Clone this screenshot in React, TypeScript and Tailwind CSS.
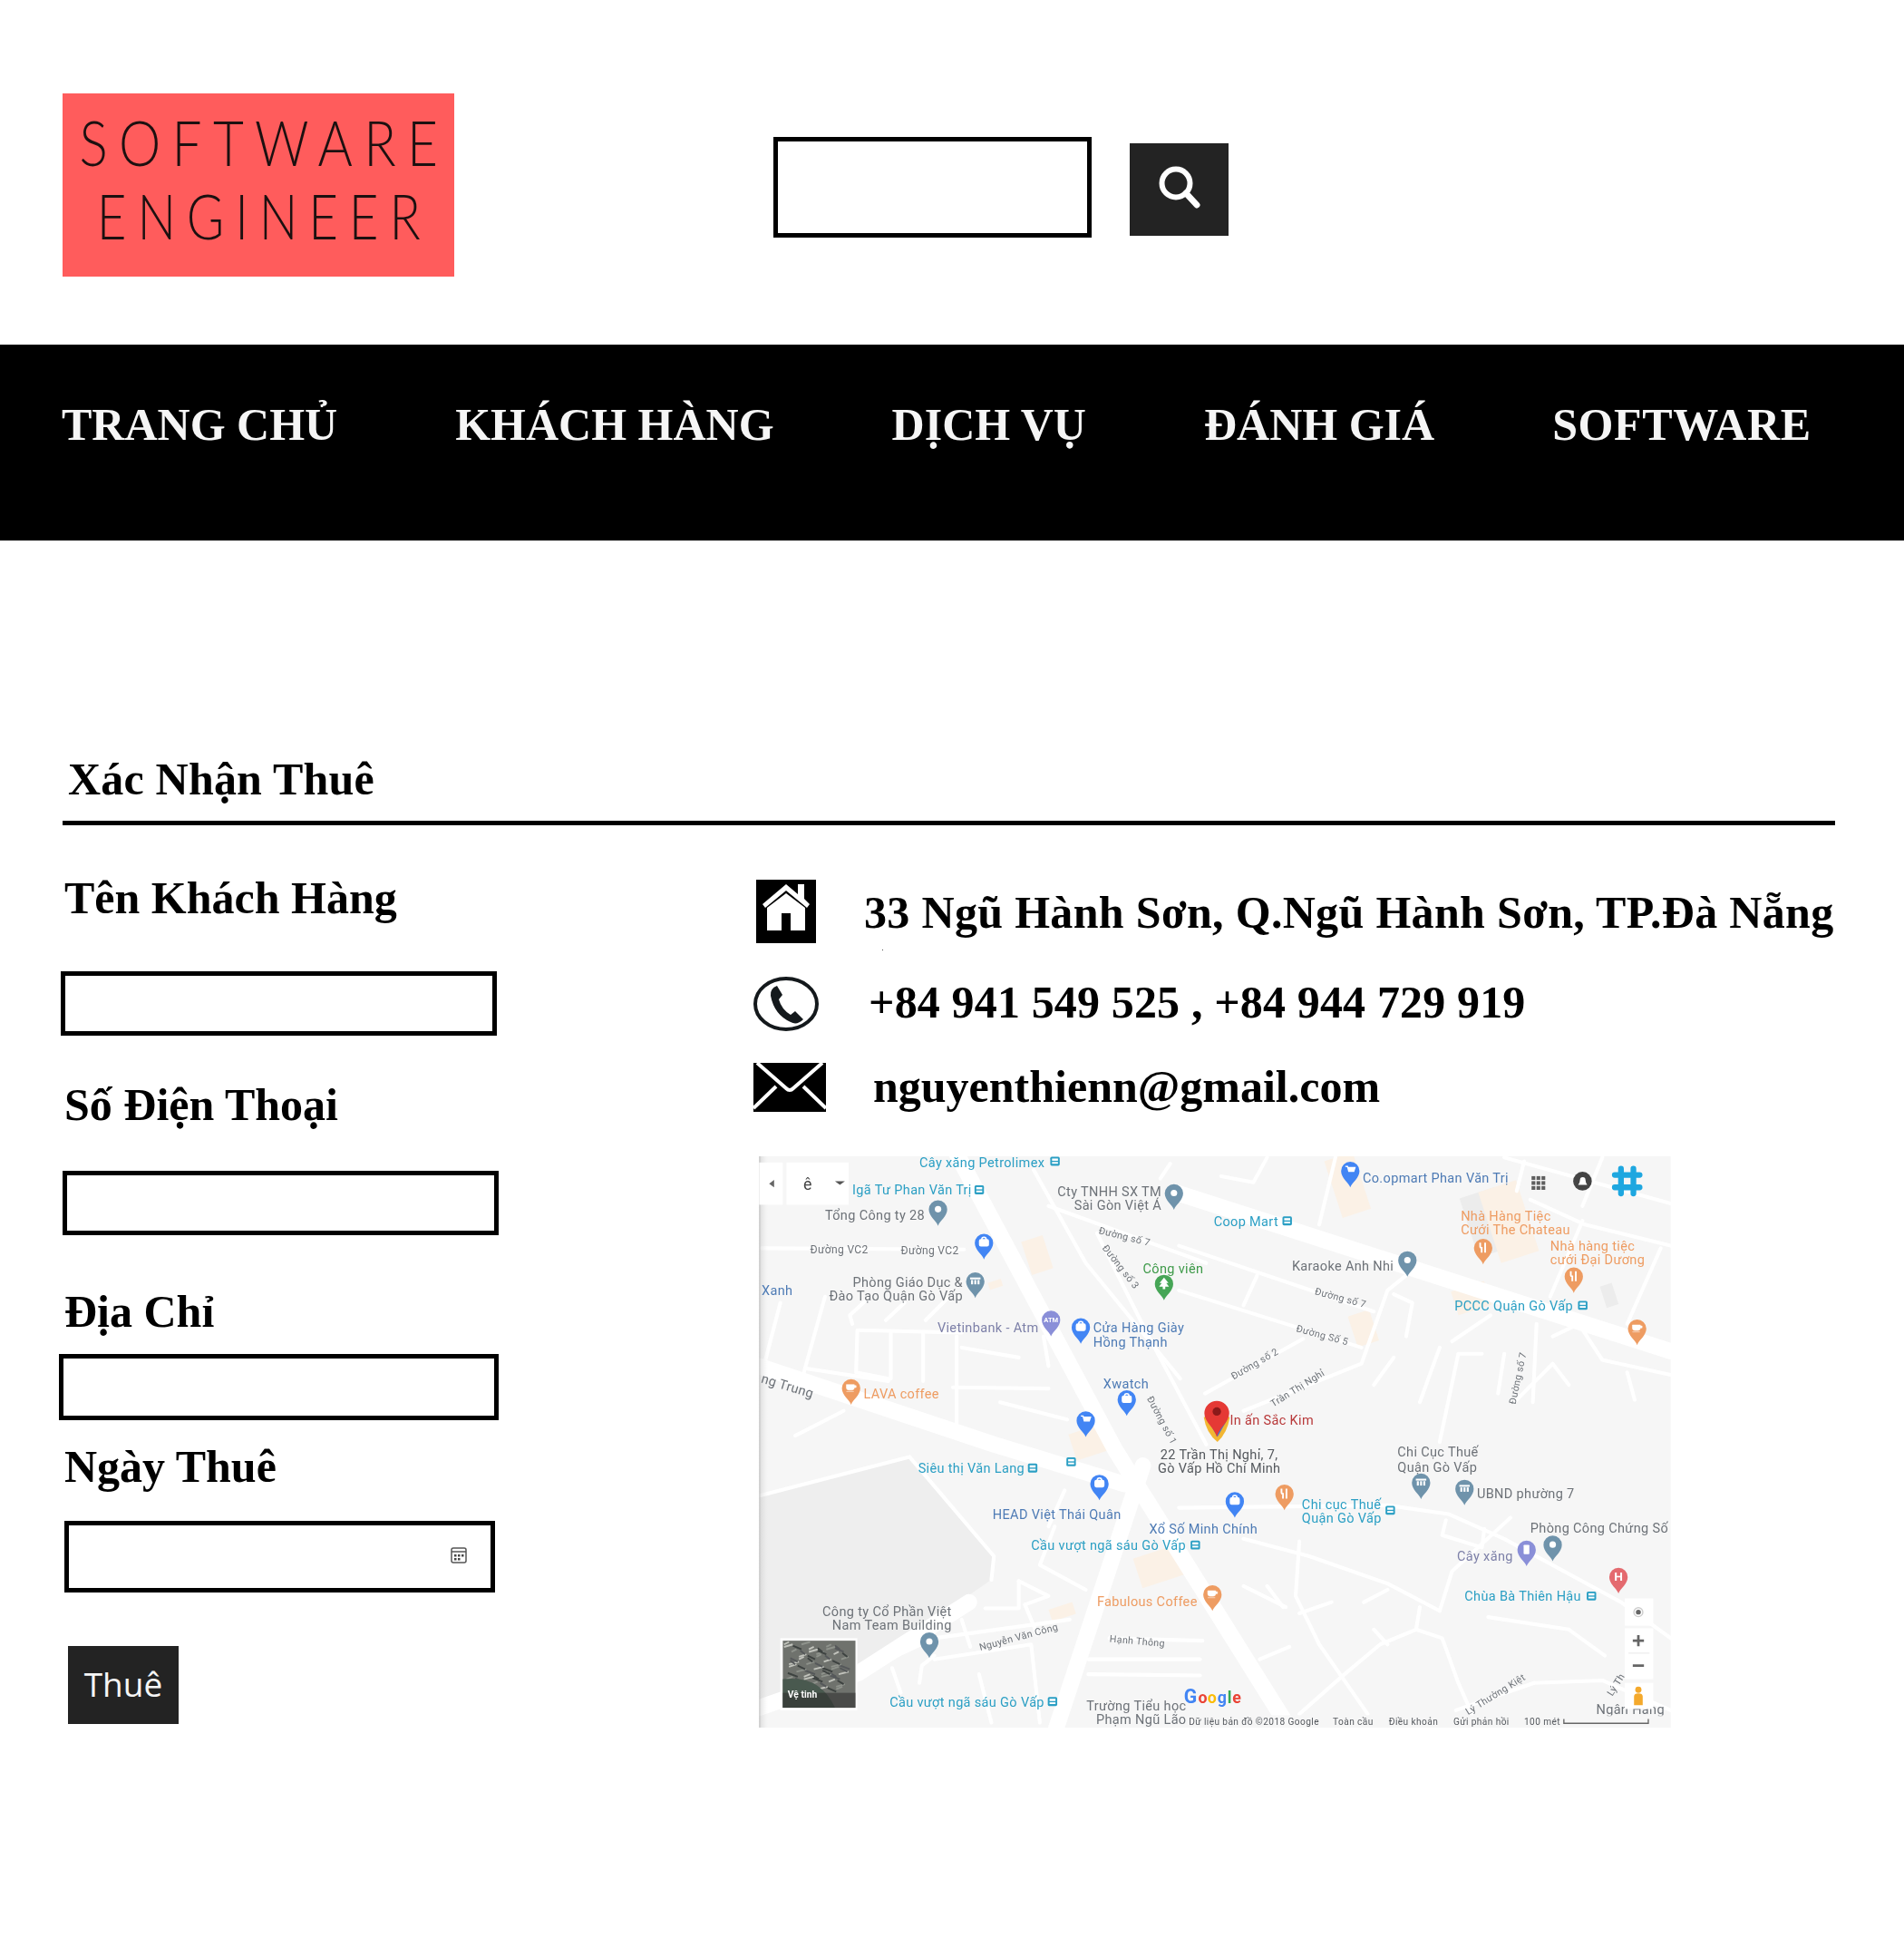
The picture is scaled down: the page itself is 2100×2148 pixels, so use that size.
const serif = "font-['Liberation_Serif',serif]";

type Label = { x: number; y: number; t: string; c?: string; a?: "end" | "middle"; r?: number; s?: number };
type PinData = { x: number; y: number; c: string; k?: string };

const BLUE = "#4285f4";
const SLATE = "#6f93ab";
const ORANGE = "#ee9c62";
const TEAL = "#2b9fc4";
const GRAY = "#6d7278";
const NAVY = "#4e7bb5";

// coordinates below are read off the shrunk screenshot, viewBox maps them back
const labels: Label[] = [
  { x: 740, y: 940, t: "Cây xăng Petrolimex", c: TEAL },
  { x: 686, y: 962, t: "Igã Tư Phan Văn Trị", c: TEAL },
  { x: 664, y: 982, t: "Tổng Công ty 28", c: GRAY },
  { x: 652, y: 1009, t: "Đường VC2", c: GRAY, s: 8.8 },
  { x: 725, y: 1010, t: "Đường VC2", c: GRAY, s: 8.8 },
  { x: 775, y: 1036, t: "Phòng Giáo Dục &", c: GRAY, a: "end" },
  { x: 775, y: 1047, t: "Đào Tạo Quận Gò Vấp", c: GRAY, a: "end" },
  { x: 613, y: 1043, t: "Xanh", c: NAVY },
  { x: 836, y: 1073, t: "Vietinbank - Atm", c: "#7d80a8", a: "end" },
  { x: 880, y: 1073, t: "Cửa Hàng Giày", c: NAVY },
  { x: 880, y: 1084, t: "Hồng Thạnh", c: NAVY },
  { x: 612, y: 1113, t: "ng Trung", c: GRAY, r: 17 },
  { x: 695, y: 1126, t: "LAVA coffee", c: ORANGE },
  { x: 888, y: 1118, t: "Xwatch", c: NAVY },
  { x: 923, y: 1126, t: "Đường số 1", c: GRAY, r: 62, s: 7.8 },
  { x: 935, y: 963, t: "Cty TNHH SX TM", c: GRAY, a: "end" },
  { x: 935, y: 974, t: "Sài Gòn Việt Á", c: GRAY, a: "end" },
  { x: 884, y: 993, t: "Đường số 7", c: GRAY, r: 14, s: 7.8 },
  { x: 887, y: 1005, t: "Đường số 3", c: GRAY, r: 52, s: 7.8 },
  { x: 920, y: 1025, t: "Công viên", c: "#3f9a4a" },
  { x: 977, y: 987, t: "Coop Mart", c: TEAL },
  { x: 1097, y: 952, t: "Co.opmart Phan Văn Trị", c: NAVY },
  { x: 1176, y: 983, t: "Nhà Hàng Tiệc", c: ORANGE },
  { x: 1176, y: 994, t: "Cưới The Chateau", c: ORANGE },
  { x: 1248, y: 1007, t: "Nhà hàng tiệc", c: ORANGE },
  { x: 1248, y: 1018, t: "cưới Đại Dương", c: ORANGE },
  { x: 1040, y: 1023, t: "Karaoke Anh Nhi", c: GRAY },
  { x: 1171, y: 1055, t: "PCCC Quận Gò Vấp", c: TEAL },
  { x: 1058, y: 1042, t: "Đường số 7", c: GRAY, r: 15, s: 7.8 },
  { x: 1043, y: 1072, t: "Đường Số 5", c: GRAY, r: 15, s: 7.8 },
  { x: 993, y: 1111, t: "Đường số 2", c: GRAY, r: -30, s: 7.8 },
  { x: 1025, y: 1133, t: "Trần Thị Nghỉ", c: GRAY, r: -32, s: 7.8 },
  { x: 1220, y: 1131, t: "Đường số 7", c: GRAY, r: -78, s: 7.8 },
  { x: 990, y: 1147, t: "In ấn Sắc Kim", c: "#b8393a" },
  { x: 934, y: 1175, t: "22 Trần Thị Nghỉ, 7,", c: "#55595e" },
  { x: 932, y: 1186, t: "Gò Vấp Hồ Chí Minh", c: "#55595e" },
  { x: 739, y: 1186, t: "Siêu thị Văn Lang", c: TEAL },
  { x: 1125, y: 1173, t: "Chi Cục Thuế", c: GRAY },
  { x: 1125, y: 1185, t: "Quận Gò Vấp", c: GRAY },
  { x: 1189, y: 1206, t: "UBND phường 7", c: GRAY },
  { x: 1048, y: 1215, t: "Chi cục Thuế", c: TEAL },
  { x: 1048, y: 1226, t: "Quận Gò Vấp", c: TEAL },
  { x: 799, y: 1223, t: "HEAD Việt Thái Quân", c: NAVY },
  { x: 925, y: 1235, t: "Xổ Số Minh Chính", c: NAVY },
  { x: 830, y: 1248, t: "Cầu vượt ngã sáu Gò Vấp", c: TEAL },
  { x: 1232, y: 1234, t: "Phòng Công Chứng Số", c: GRAY },
  { x: 1173, y: 1257, t: "Cây xăng", c: "#7d80a8" },
  { x: 1179, y: 1289, t: "Chùa Bà Thiên Hậu", c: TEAL },
  { x: 883, y: 1293, t: "Fabulous Coffee", c: ORANGE },
  { x: 766, y: 1301, t: "Công ty Cổ Phần Việt", c: GRAY, a: "end" },
  { x: 766, y: 1312, t: "Nam Team Building", c: GRAY, a: "end" },
  { x: 789, y: 1329, t: "Nguyễn Văn Công", c: GRAY, r: -15, s: 7.8 },
  { x: 893, y: 1322, t: "Hạnh Thông", c: GRAY, r: 5, s: 7.8 },
  { x: 716, y: 1374, t: "Cầu vượt ngã sáu Gò Vấp", c: TEAL },
  { x: 955, y: 1377, t: "Trường Tiểu học", c: GRAY, a: "end" },
  { x: 955, y: 1388, t: "Phạm Ngũ Lão", c: GRAY, a: "end" },
  { x: 1182, y: 1381, t: "Lý Thường Kiệt", c: GRAY, r: -32, s: 7.8 },
  { x: 1298, y: 1366, t: "Lý Th", c: GRAY, r: -58, s: 7.8 },
  { x: 1285, y: 1380, t: "Ngân Hàng", c: GRAY },
];

const stations: [number, number][] = [
  [849, 935], [788, 958], [1036, 983], [1274, 1051], [831, 1182], [862, 1177], [1119, 1216],
  [962, 1244], [1281, 1285], [847, 1370],
];

const pins: PinData[] = [
  { x: 755, y: 987, c: SLATE },
  { x: 792, y: 1014, c: BLUE, k: "bag" },
  { x: 785, y: 1045, c: SLATE, k: "gov" },
  { x: 846, y: 1076, c: "#8a8fd8", k: "atm" },
  { x: 870, y: 1082, c: BLUE, k: "bag" },
  { x: 945, y: 974, c: SLATE },
  { x: 937, y: 1047, c: "#46a556", k: "tree" },
  { x: 1087, y: 956, c: BLUE, k: "cart" },
  { x: 1133, y: 1028, c: SLATE },
  { x: 1194, y: 1018, c: ORANGE, k: "food" },
  { x: 1267, y: 1041, c: ORANGE, k: "food" },
  { x: 1318, y: 1083, c: ORANGE, k: "cup" },
  { x: 685, y: 1131, c: ORANGE, k: "cup" },
  { x: 907, y: 1140, c: BLUE, k: "bag" },
  { x: 874, y: 1157, c: BLUE, k: "cart" },
  { x: 885, y: 1208, c: BLUE, k: "bag" },
  { x: 994, y: 1222, c: BLUE, k: "bag" },
  { x: 1034, y: 1216, c: ORANGE, k: "food" },
  { x: 1144, y: 1207, c: SLATE, k: "gov" },
  { x: 1179, y: 1212, c: SLATE, k: "gov" },
  { x: 1250, y: 1257, c: SLATE },
  { x: 1229, y: 1261, c: "#8a8fd8", k: "gas" },
  { x: 1303, y: 1283, c: "#e46a6f", k: "h" },
  { x: 976, y: 1297, c: ORANGE, k: "cup" },
  { x: 748, y: 1335, c: SLATE },
];

const wideRoads = [
  "M768 925 L898 1168 L1040 1395",
  "M611 1100 L800 1163 L905 1195",
  "M920 1180 L849 1395",
  "M949 961 L1345 1088",
  "M611 1375 L691 1347 L780 1290",
];

const thinRoads = [
  "M1106 1115 L1122 1093", "M1143 1129 L1159 1085", "M1159 1161 L1174 1090 L1193 1090", "M1206 1122 L1211 1090",
  "M1234 1129 L1237 1066", "M1219 1129 L1250 1098 L1263 1115", "M1250 1076 L1271 1066 L1290 1095 L1345 1107",
  "M1310 1105 L1316 1127", "M1169 1080 L1200 1059", "M1132 1076 L1137 1049 L1122 1042", "M949 1003 L1106 1056",
  "M949 1039 L1096 1085", "M1001 1051 L1012 1027", "M970 1122 L1049 1078", "M1001 1136 L1096 1098 L1117 1039 L1132 1027",
  "M949 1214 L1117 1212 L1166 1219 L1211 1239 L1305 1290 L1345 1319", "M1001 1239 L1054 1253 L1117 1275 L1159 1297",
  "M1046 1241 L1043 1285 L1062 1324 L1101 1380", "M1143 1294 L1140 1312 L1111 1324 L1080 1350 L1046 1380",
  "M1140 1312 L1161 1319 L1174 1355 L1185 1380", "M1198 1302 L1263 1312 L1292 1333", "M1235 1355 L1290 1353 L1345 1377",
  "M1172 1377 L1235 1355", "M1106 1312 L1117 1324", "M1001 1277 L1035 1294", "M1020 1277 L1033 1294",
  "M1046 1299 L1072 1290", "M1014 1336 L1038 1326", "M1159 1297 L1169 1265 L1216 1222", "M1098 1290 L1117 1280",
  "M1164 1224 L1161 1236 L1193 1246 L1195 1231",
  "M613 1005 L776 1006", "M628 1049 L616 1095", "M664 1044 L647 1105", "M691 1071 L774 1073", "M690 1071 L689 1105 L715 1110",
  "M717 1073 L717 1110", "M743 1073 L743 1112", "M770 1076 L770 1153", "M774 1085 L820 1093", "M650 1102 L715 1112",
  "M767 1117 L844 1118", "M805 1129 L859 1143", "M686 1066 L684 1059 L698 1046", "M713 1063 L728 1049", "M745 1063 L762 1046",
  "M840 1076 L844 1100", "M640 1156 L679 1136", "M832 942 L874 1017 L950 1110", "M844 971 L971 1017", "M883 993 L922 1071 L971 1163",
  "M942 937 L934 949", "M820 1273 L820 1295 L793 1295", "M820 1273 L844 1285 L825 1292", "M825 1292 L835 1316",
  "M849 1229 L837 1260 L874 1280", "M857 1200 L844 1229", "M694 1346 L752 1319 L861 1304", "M752 1336 L830 1324 L837 1387",
  "M740 1355 L742 1341 L752 1333", "M774 1304 L781 1326", "M788 1348 L798 1387", "M718 1343 L725 1363", "M876 1336 L966 1336",
  "M876 1348 L966 1349", "M612 1204 L732 1173 L800 1253 L798 1272", "M920 1200 L971 1285", "M893 1319 L968 1321",
  "M1075 932 L1062 986", "M1345 969 L1211 932", "M1345 1003 L1276 986 L1232 966", "M1274 983 L1248 1044", "M1290 932 L1274 971",
  "M1337 1005 L1310 1066", "M1227 935 L1221 959", "M1020 932 L1009 952 L983 947",
];

const blocks: [number, number, number, number, string][] = [
  [822, 1000, 18, 28, "#fbf1e6"], [795, 1033, 11, 6, "#fbf1e6"], [1066, 935, 24, 48, "#fbf1e6"], [1175, 965, 30, 50, "#ececec"], [1190, 960, 32, 60, "#fbf1e6"],
  [1168, 1040, 28, 20, "#fbf1e6"], [1085, 1060, 18, 26, "#fbf1e6"], [860, 1155, 32, 22, "#fbf1e6"], [912, 1255, 40, 25, "#fbf1e6"], [1288, 1036, 10, 18, "#ececec"],
  [844, 1296, 20, 10, "#fbf1e6"],
];

// deterministic specks for the satellite thumbnail
const satelliteLines = Array.from({ length: 70 }, (_, i) => {
  const x = 631 + ((i * 37) % 48);
  const y = 1324 + ((i * 23) % 38);
  const c = ["#c2c4bd", "#55585a", "#8f938c", "#3d4240"][i % 4];
  return { x, y, c, dx: 4 + (i % 5), dy: i % 2 ? 3 : -2 };
});

function PinGlyph({ k }: { k?: string }) {
  if (k === "bag") return <g fill="none" stroke="#fff" strokeWidth="1.1"><rect x="-3.5" y="-2.5" width="7" height="5" rx="1" fill="#fff" /><path d="M-1.8 -2.5 a1.8 2 0 0 1 3.6 0" /></g>;
  if (k === "cart") return <path d="M-4 -3.5 h1.8 l1 4 h4 l1 -3 h-5.5" fill="#fff" stroke="#fff" />;
  if (k === "gov") return <g fill="#fff"><rect x="-4.2" y="-3" width="8.4" height="1.5" /><rect x="-3.4" y="-1" width="1.6" height="3.5" /><rect x="-.8" y="-1" width="1.6" height="3.5" /><rect x="1.8" y="-1" width="1.6" height="3.5" /></g>;
  if (k === "food") return <path d="M-2.4 -4 v3 q0 1.2 1.2 1.2 v3.8 M1.6 -4 v8" stroke="#fff" strokeWidth="1.4" fill="none" />;
  if (k === "cup") return <path d="M-3.8 -2.8 h6.4 v2.4 q0 2 -2 2 h-2.4 q-2 0 -2 -2 z M2.6 -2 h1.4 v1.6 h-1.4 M-3.8 2.8 h6" fill="#fff" stroke="#fff" strokeWidth=".4" />;
  if (k === "tree") return <path d="M0 -5 L3.6 -.6 H1.8 L4 2.4 H1 V4.4 H-1 V2.4 H-4 L-1.8 -.6 H-3.6 Z" fill="#fff" />;
  if (k === "atm") return <text x="0" y="2" textAnchor="middle" fontSize="5.5" fontWeight="700" fill="#fff">ATM</text>;
  if (k === "gas") return <rect x="-2.4" y="-3.8" width="4.6" height="7.6" rx=".6" fill="#fff" />;
  if (k === "h") return <text x="0" y="3.4" textAnchor="middle" fontSize="10" fontWeight="700" fill="#fff">H</text>;
  return <circle r="2.6" fill="#fff" />;
}

function MapPin({ x, y, c, k }: PinData) {
  return (
    <g transform={`translate(${x} ${y})`}>
      <path d="M0 0 C-1.4 -4 -7.4 -7.5 -7.4 -13.2 A7.4 7.4 0 1 1 7.4 -13.2 C7.4 -7.5 1.4 -4 0 0 Z" fill={c} />
      <g transform="translate(0 -13.4)"><PinGlyph k={k} /></g>
    </g>
  );
}

// Google map image, redrawn: roads, buildings, pins and labels
function MapDrawing() {
  return (
    <svg viewBox="611 931 734 460" className="block w-full h-full blur-[0.35px] font-['Roboto',sans-serif]">
      <defs>
        <linearGradient id="edge" x1="0" x2="1" y1="0" y2="0">
          <stop offset="0" stopColor="#9a9a9a" stopOpacity=".7" />
          <stop offset=".2" stopColor="#bdbdbd" stopOpacity=".35" />
          <stop offset="1" stopColor="#ddd" stopOpacity="0" />
        </linearGradient>
      </defs>
      <rect x="611" y="931" width="734" height="460" fill="#f6f6f6" />
      <path d="M612 1204 L732 1173 L800 1253 L798 1272 L691 1345 L612 1375 Z" fill="#eeeeee" />
      {blocks.map(([x, y, w, h, c]) => (
        <rect key={`${x}-${y}`} x={x} y={y} width={w} height={h} fill={c} transform={`rotate(-18 ${x} ${y})`} />
      ))}
      <g fill="none" stroke="#fff" strokeLinecap="round" strokeLinejoin="round">
        {thinRoads.map((d) => <path key={d} d={d} strokeWidth="3" />)}
        {wideRoads.map((d) => <path key={d} d={d} strokeWidth="13" />)}
      </g>
      <rect x="611" y="931" width="7" height="460" fill="url(#edge)" />

      {labels.map((l) => (
        <text
          key={`${l.t}-${l.x}-${l.y}`}
          x={l.x}
          y={l.y}
          fill={l.c}
          fontSize={l.s ?? 10.6}
          letterSpacing=".25"
          textAnchor={l.a ?? "start"}
          transform={l.r ? `rotate(${l.r} ${l.x} ${l.y})` : undefined}
        >
          {l.t}
        </text>
      ))}

      {stations.map(([x, y]) => (
        <g key={`${x}-${y}`}>
          <rect x={x - 3.6} y={y - 3.6} width="7.6" height="7.2" rx="1.2" fill={TEAL} />
          <rect x={x - 2.2} y={y - 2.2} width="4.8" height="1.8" fill="#fff" />
          <rect x={x - 2.2} y={y + .6} width="4.8" height="1.4" fill="#fff" />
        </g>
      ))}
      {pins.map((p) => <MapPin key={`${p.x}-${p.y}`} {...p} />)}

      {/* red marker for the searched address */}
      <g>
        <path d="M969 1141 Q971 1154 980 1161 Q988 1154 990 1141 Z" fill="#f2b632" />
        <path d="M972 1143 L980 1157 L988 1143 Z" fill="#4a74c9" />
        <path d="M979.5 1157 C978 1150 969.5 1145 969.500 1138 A10 10 0 0 1 989.500 1138 C989.500 1145 981 1150 979.500 1157 Z" fill="#e53935" />
        <circle cx="979.5" cy="1136.5" r="3.4" fill="#8b1a1a" />
      </g>

      {/* map controls */}
      <rect x="611" y="936" width="19" height="34" fill="#fff" />
      <path d="M623 950 L619 953 L623 956 Z" fill="#666" />
      <rect x="633" y="936" width="50" height="34" fill="#fff" />
      <text x="650" y="958" fontSize="13" textAnchor="middle" fill="#444">ê</text>
      <path d="M672 951 H680 L676 954 Z" fill="#555" />

      <g fill="#5f5f5f">
        {[1233, 1237, 1241].map((x) => [947, 951, 955].map((y) => <rect key={`${x}${y}`} x={x} y={y} width="3" height="3" />))}
      </g>
      <circle cx="1274" cy="951" r="7.5" fill="#444" />
      <path d="M1270.5 954 Q1272 952 1272 950 A2.2 2.2 0 0 1 1276.4 950 Q1276.4 952 1277.8 954 Z" fill="#fff" />
      <g stroke="#1ea7e0" strokeWidth="4.6" fill="none" strokeLinecap="round">
        <path d="M1305 941 V961 M1315 941 V961 M1300 946 H1320 M1300 956 H1320" />
      </g>

      <rect x="628" y="1319" width="62" height="58" fill="#fff" />
      <rect x="630" y="1321" width="58.500" height="54" fill="#6f726d" />
      {satelliteLines.map((s) => (
        <path key={`${s.x}-${s.y}`} d={`M${s.x} ${s.y} l${s.dx} ${s.dy}`} stroke={s.c} strokeWidth="1.4" />
      ))}
      <path d="M630 1352 Q660 1348 672 1375 H630 Z" fill="#49594f" />
      <rect x="630" y="1363" width="58.500" height="12" fill="#2c2c2c" fillOpacity=".55" />
      <text x="634" y="1367" fontSize="7.500" fontWeight="700" fill="#fff">Vệ tinh</text>

      <g fontWeight="700" fontSize="15.500">
        <text x="953" y="1371" fill="#4285f4">G</text>
        <text x="964.500" y="1371" fontSize="13" fill="#ea4335">o</text>
        <text x="972" y="1371" fontSize="13" fill="#fbbc05">o</text>
        <text x="980" y="1371" fontSize="13" fill="#4285f4">g</text>
        <text x="988" y="1371" fontSize="13" fill="#34a853">l</text>
        <text x="992" y="1371" fontSize="13" fill="#ea4335">e</text>
      </g>

      <rect x="955" y="1381" width="390" height="10" fill="#f6f6f6" fillOpacity=".75" />
      <g fontSize="7.400" fill="#55595e" letterSpacing=".3">
        <text x="957" y="1389">Dữ liệu bản đồ ©2018 Google</text>
        <text x="1073" y="1389">Toàn cầu</text>
        <text x="1118" y="1389">Điều khoản</text>
        <text x="1170" y="1389">Gửi phản hồi</text>
        <text x="1227" y="1389">100 mét</text>
      </g>
      <path d="M1259 1384 V1387.500 H1327 V1384" stroke="#666" strokeWidth="1" fill="none" />

      <rect x="1308" y="1287" width="23" height="22" fill="#fff" />
      <circle cx="1319" cy="1298" r="2" fill="#666" />
      <circle cx="1319" cy="1298" r="3.6" fill="none" stroke="#ccc" />
      <rect x="1308" y="1311" width="23" height="41" fill="#fff" />
      <path d="M1314.500 1321 H1323.500 M1319 1316.500 V1325.500 M1314.500 1341 H1323.500" stroke="#666" strokeWidth="2" />
      <path d="M1311 1331 H1328" stroke="#eee" />
      <rect x="1308" y="1355" width="23" height="21" fill="#fff" />
      <circle cx="1319" cy="1360.500" r="2.500" fill="#f4a92c" />
      <path d="M1315.500 1373 V1366 Q1315.500 1363.500 1319 1363.500 Q1322.500 1363.500 1322.500 1366 V1373 Z" fill="#f4a92c" />
    </svg>
  );
}

function LogoBox() {
  return (
    <div className="w-[432px] h-[202px] pb-[14px] bg-[#ff5c5c] flex flex-col items-center justify-center gap-[31px] text-[#1c1010] font-['Lato',sans-serif] font-light overflow-hidden">
      <span className="block text-[68px] leading-[50px] tracking-[0.21em] indent-[0.21em] scale-x-[0.86] whitespace-nowrap">SOFTWARE</span>
      <span className="block text-[68px] leading-[50px] tracking-[0.21em] indent-[0.21em] scale-x-[0.83] whitespace-nowrap">ENGINEER</span>
    </div>
  );
}

function Field({ label, labelClass, boxClass, children }: { label: string; labelClass: string; boxClass: string; children?: React.ReactNode }) {
  return (
    <>
      <label className={`block text-[50px] font-bold leading-[58px] text-black ${labelClass}`}>{label}</label>
      <div className={`border-[5px] border-black bg-white flex items-center justify-end ${boxClass}`}>{children}</div>
    </>
  );
}

function ContactRow({ icon, text, rowClass, textClass }: { icon: React.ReactNode; text: string; rowClass: string; textClass: string }) {
  return (
    <div className={`flex items-center ${rowClass}`}>
      {icon}
      <span className={`text-[50px] font-bold leading-[58px] text-black whitespace-nowrap ${textClass}`}>{text}</span>
    </div>
  );
}

export default function App() {
  const navItems = ["TRANG CHỦ", "KHÁCH HÀNG", "DỊCH VỤ", "ĐÁNH GIÁ", "SOFTWARE"];

  return (
    <div className={`relative w-[2100px] h-[2148px] bg-white overflow-hidden ${serif}`}>
      <header className="h-[380px] pl-[69px] pt-[103px] flex items-start">
        <LogoBox />
        <div className="ml-[352px] mt-[48px] w-[351px] h-[111px] border-[5px] border-black" />
        <button className="ml-[42px] mt-[55px] w-[109px] h-[102px] bg-[#232323] flex items-center justify-center">
          <svg viewBox="0 0 52 52" className="w-[52px] h-[52px] blur-[0.5px]" fill="none" stroke="#fff" strokeLinecap="round">
            <circle cx="22" cy="19" r="15.500" strokeWidth="6" />
            <path d="M33 30 L45 43" strokeWidth="7" />
          </svg>
        </button>
      </header>

      <nav className="h-[216px] bg-black pl-[68px] pt-[58px] flex gap-[130px]">
        {navItems.map((item) => (
          <a key={item} className={`block text-[50px] leading-[60px] font-bold text-[#f5f5f5] whitespace-nowrap ${item === "SOFTWARE" ? "tracking-[0.6px]" : ""}`}>
            {item}
          </a>
        ))}
      </nav>

      <main className="pt-[234px] pl-[69px] w-[2024px]">
        <h2 className="pl-[6px] text-[50px] font-bold leading-[58px] text-black tracking-[0.2px]">Xác Nhận Thuê</h2>
        <div className="mt-[17px] h-[5px] bg-black" />

        <div className="flex">
          <form className="w-[760px] shrink-0">
            <Field label="Tên Khách Hàng" labelClass="ml-[2px] mt-[51px]" boxClass="mt-[52px] w-[481px] h-[71px] -ml-[2px]" />
            <Field label="Số Điện Thoại" labelClass="ml-[2px] mt-[47px]" boxClass="mt-[44px] w-[481px] h-[71px]" />
            <Field label="Địa Chỉ" labelClass="ml-[2px] mt-[55px]" boxClass="mt-[18px] w-[485px] h-[73px] -ml-[4px]" />
            <Field label="Ngày Thuê" labelClass="ml-[2px] mt-[22px]" boxClass="mt-[31px] w-[475px] h-[79px] ml-[2px] pr-[26px]">
              <svg viewBox="0 0 18 18" className="w-[18px] h-[18px] -translate-y-[2px]" fill="none">
                <rect x="1" y="1" width="16" height="16" rx="2" stroke="#555" strokeWidth="1.500" />
                <path d="M1 5 H17" stroke="#555" strokeWidth="1.500" />
                <path d="M4 8 H6.500 V10.500 H4 Z M8 8 H10.500 V10.500 H8 Z M12 8 H14.500 V10.500 H12 Z M4 12 H6.500 V14.500 H4 Z M8 12 H10.500 V14.500 H8 Z" fill="#444" />
              </svg>
            </Field>
            <button type="button" className="mt-[59px] ml-[6px] w-[122px] h-[86px] pb-[3px] bg-[#232323] text-[#f5f5f5] text-[37px] font-medium font-['Open_Sans',sans-serif]">
              Thuê
            </button>
          </form>

          <section className="flex-1 min-w-0 pt-[60px]">
            <ContactRow
              rowClass="h-[70px]"
              textClass="ml-[53px] translate-y-[1px] tracking-[0.32px]"
              text="33 Ngũ Hành Sơn, Q.Ngũ Hành Sơn, TP.Đà Nẵng"
              icon={
                <svg viewBox="0 0 66 70" className="ml-[5px] w-[66px] h-[70px] shrink-0">
                  <rect width="66" height="70" fill="#000" />
                  <path d="M7 27 L33 5 L46 16 V5 L53 5 V21 L59 27 L56 31 L33 12 L10 31 Z" fill="#fff" />
                  <path d="M12 56 V31 L33 15 L54 31 V56 H38 V37 H28 V56 Z" fill="#fff" />
                </svg>
              }
            />
            <ContactRow
              rowClass="h-[60px] mt-[37px]"
              textClass="ml-[55px] -translate-y-[2px] tracking-[0.15px]"
              text="+84 941 549 525 , +84 944 729 919"
              icon={
                <svg viewBox="0 0 72 60" className="ml-[2px] w-[72px] h-[60px] shrink-0">
                  <ellipse cx="36" cy="30" rx="34" ry="28" fill="none" stroke="#14191c" strokeWidth="4" />
                  <path d="M19 21 Q18 13 26 10 L32 20 L28 25 Q31 36 41 42 L46 38 L55 47 Q48 54 41 50 Q23 42 19 21 Z" fill="#14191c" />
                </svg>
              }
            />
            <ContactRow
              rowClass="h-[54px] mt-[35px]"
              textClass="ml-[52px] -translate-y-[1px]"
              text="nguyenthienn@gmail.com"
              icon={
                <svg viewBox="0 0 80 54" className="ml-[2px] w-[80px] h-[54px] shrink-0">
                  <rect width="80" height="54" fill="#000" />
                  <path d="M4 0 L36 28 Q40 32 44 28 L76 0 M0 50 L25 26 M80 50 L55 26" fill="none" stroke="#fff" strokeWidth="4" />
                </svg>
              }
            />
            <div className="mt-[49px] ml-[8px] w-[1006px] h-[630px] overflow-hidden">
              <MapDrawing />
            </div>
          </section>
        </div>
      </main>

      {/* stray speck under the address line */}
      <span className="absolute left-[973px] top-[1047px] w-[1px] h-[1px] bg-black/70" />
    </div>
  );
}
